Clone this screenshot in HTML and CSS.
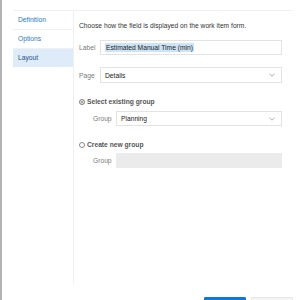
FILE: index.html
```html
<!DOCTYPE html>
<html lang="en">
<head>
    <meta charset="UTF-8">
    <title>Layout</title>
    <link rel="stylesheet" href="styles.css">
</head>
<body>
    <div class="frame">
        <div class="panel">
            <nav class="nav">
                <a class="nav-item">Definition</a>
                <a class="nav-item">Options</a>
                <a class="nav-item active">Layout</a>
            </nav>

            <div class="content">
                <p class="intro">Choose how the field is displayed on the work item form.</p>

                <div class="row">
                    <label class="lbl">Label</label>
                    <div class="field"><span class="selected">Estimated Manual Time (min)</span></div>
                </div>

                <div class="row row-page">
                    <label class="lbl">Page</label>
                    <div class="field select">
                        <span>Details</span>
                        <svg class="chev" width="6" height="4" viewBox="0 0 6 4"><path d="M0.5 0.7 L3 3.2 L5.5 0.7" fill="none" stroke="#8a8a8a" stroke-width="0.7"/></svg>
                    </div>
                </div>

                <div class="radio-line first">
                    <span class="radio checked"></span>
                    <span class="radio-text">Select existing group</span>
                </div>
                <div class="row sub">
                    <label class="lbl">Group</label>
                    <div class="field select">
                        <span>Planning</span>
                        <svg class="chev" width="6" height="4" viewBox="0 0 6 4"><path d="M0.5 0.7 L3 3.2 L5.5 0.7" fill="none" stroke="#8a8a8a" stroke-width="0.7"/></svg>
                    </div>
                </div>

                <div class="radio-line">
                    <span class="radio"></span>
                    <span class="radio-text">Create new group</span>
                </div>
                <div class="row sub sub-last">
                    <label class="lbl">Group</label>
                    <div class="field disabled"></div>
                </div>
            </div>
        </div>

        <div class="footer">
            <button class="btn primary"></button>
            <button class="btn"></button>
        </div>
    </div>
</body>
</html>
```

FILE: styles.css
```css
body {
    margin: 0;
    padding: 0;
    background-color: #ffffff;
    font-family: "Liberation Sans", Arial, sans-serif;
    font-size: 6.7px;
    color: #222;
}

.frame {
    height: 300px;
    box-sizing: border-box;
    border-left: 2px solid #b3b3b3;
    padding: 10px 7px 0 11px;
    overflow: hidden;
}

.panel {
    display: flex;
    height: 273px;
    border-top: 1px solid #f1f1f1;
}

.nav {
    width: 60px;
    border-right: 1px solid #f0f0f0;
    display: flex;
    flex-direction: column;
}

.nav-item {
    display: block;
    height: 18px;
    line-height: 18px;
    padding-left: 5px;
    color: #2a79c4;
    border-bottom: 1px solid #f0f0f0;
}

.nav-item.active {
    background-color: #deebf8;
    color: #1d4f82;
    border-bottom: none;
}

.content {
    flex: 1;
    padding: 10px 11px 0 5px;
}

.intro {
    margin: 0 0 10px 0;
    line-height: 9px;
    color: #333;
}

.row {
    display: flex;
    align-items: center;
}

.row-page {
    margin-top: 12px;
}

.lbl {
    width: 21px;
    color: #7a7a7a;
    flex-shrink: 0;
}

.field {
    flex: 1;
    height: 15px;
    box-sizing: border-box;
    border: 1px solid #e3e3e3;
    padding-left: 4px;
    display: flex;
    align-items: center;
}

.row-page .field {
    height: 16px;
}

.selected {
    background-color: #cde3f6;
    padding: 1px 1px;
}

.select {
    justify-content: space-between;
    padding-right: 6px;
}

.chev {
    display: block;
}

.radio-line {
    display: flex;
    align-items: center;
    height: 9px;
    margin-top: 14px;
    margin-bottom: 5px;
}

.radio {
    width: 6px;
    height: 6px;
    border: 0.8px solid #8a8a8a;
    border-radius: 50%;
    box-sizing: border-box;
    margin-right: 2px;
}

.radio.checked {
    background-color: #8a8a8a;
    box-shadow: inset 0 0 0 1px #ffffff;
}

.radio-text {
    font-weight: bold;
    color: #555;
}

.sub {
    padding-left: 14px;
}

.sub .lbl {
    width: 23px;
}

.sub-last {
    margin-top: -1px;
}

.disabled {
    background-color: #ebebeb;
    border-color: #ebebeb;
}

.footer {
    display: flex;
    justify-content: flex-end;
    gap: 5px;
    margin-top: 13px;
}

.btn {
    width: 42px;
    height: 14px;
    border: 1px solid #e6e6e6;
    border-radius: 1px;
    background-color: #f4f4f4;
    padding: 0;
}

.btn.primary {
    background-color: #0f78d0;
    border-color: #0f78d0;
}
```
